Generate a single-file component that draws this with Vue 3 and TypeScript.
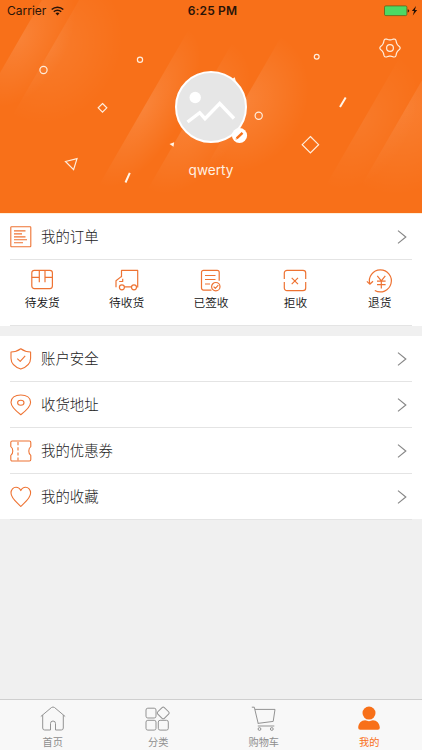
<script setup lang="ts">
interface Streak { x: number; y: number; w: number; h: number; o: number }
interface Entry { id: string; label: string }

const streaks: Streak[] = [
  { x: 20, y: 38, w: 56, h: 150, o: 0.13 },
  { x: 52, y: 47, w: 80, h: 160, o: 0.08 },
  { x: 144, y: 107, w: 46, h: 180, o: 0.14 },
  { x: 190, y: 116, w: 60, h: 170, o: 0.13 },
  { x: 244, y: 101, w: 72, h: 150, o: 0.13 },
  { x: 363, y: 121, w: 56, h: 150, o: 0.07 },
  { x: 406, y: 108, w: 90, h: 180, o: 0.1 },
]

// Six-lobed outline of the settings gear, centred on (11, 11)
const gearPoints: string = Array.from({ length: 72 }, (_, i) => {
  const a = (i / 72) * Math.PI * 2
  const r = 9 + Math.cos(6 * a) + 0.15 * Math.cos(12 * a)
  return `${(11 + r * Math.cos(a)).toFixed(2)},${(11 + r * Math.sin(a)).toFixed(2)}`
}).join(' ')

const orders: Entry[] = [
  { id: 'box', label: '待发货' },
  { id: 'truck', label: '待收货' },
  { id: 'signed', label: '已签收' },
  { id: 'reject', label: '拒收' },
  { id: 'refund', label: '退货' },
]

const entries: Entry[] = [
  { id: 'shield', label: '账户安全' },
  { id: 'pin', label: '收货地址' },
  { id: 'ticket', label: '我的优惠券' },
  { id: 'heart', label: '我的收藏' },
]

const tabs: Entry[] = [
  { id: 'home', label: '首页' },
  { id: 'category', label: '分类' },
  { id: 'cart', label: '购物车' },
  { id: 'me', label: '我的' },
]
</script>

<template>
  <main class="screen">
    <header class="hero">
      <svg class="hero-art" viewBox="0 0 422 213" aria-hidden="true">
        <defs>
          <radialGradient v-for="(s, i) in streaks" :id="`glow${i}`" :key="i" cx="0" cy="0.5" r="0.5" gradientTransform="translate(0 0) scale(1.7 1)">
            <stop offset="0" stop-color="#fff" :stop-opacity="s.o" />
            <stop offset="0.5" stop-color="#fff" :stop-opacity="s.o * 0.5" />
            <stop offset="1" stop-color="#fff" stop-opacity="0" />
          </radialGradient>
        </defs>
        <rect
          v-for="(s, i) in streaks"
          :key="i"
          :y="-s.h / 2"
          :width="s.w"
          :height="s.h"
          :fill="`url(#glow${i})`"
          :transform="`translate(${s.x} ${s.y}) rotate(30)`"
        />
        <g fill="none" stroke="#ffeedd" stroke-width="1.2">
          <circle cx="43.5" cy="70" r="3.6" />
          <circle cx="140" cy="59.7" r="2.6" />
          <circle cx="316.7" cy="56.7" r="2.4" />
          <circle cx="258.7" cy="115.7" r="3.6" />
          <path d="M102.5 103.500l4.300 4.300-4.300 4.300-4.300-4.300z" />
          <path d="M310.400 136.500l8.200 8.200-8.200 8.200-8.200-8.200z" />
          <path d="M65.500 161.500L77 158.700 73.600 169.600z" />
        </g>
        <g stroke="#fff5e8" stroke-width="2">
          <path d="M129.800 172.800l-4.300 9.700M345.700 97.500l-5.700 9.600" />
        </g>
        <path d="M169.500 143.900l4.700-1.700-.7 4.500zM231 79.500l3.800-2.200 1 4z" fill="#fff5e8" />
      </svg>

      <div class="status">
        <div class="carrier">
          <span>Carrier</span>
          <svg width="13" height="10" viewBox="0 0 13 10">
            <g fill="none" stroke="#2a1408" stroke-width="1.500">
              <path d="M.7 3.500a8.300 8.300 0 0 1 11.600 0M2.800 5.700a5.300 5.300 0 0 1 7.400 0" />
            </g>
            <path d="M4.500 7.300a3 3 0 0 1 4 0l-2 2.100z" fill="#2a1408" />
          </svg>
        </div>
        <span class="clock">6:25 PM</span>
        <div class="power">
          <svg width="34" height="12" viewBox="0 0 34 12">
            <rect x=".5" y=".9" width="22.400" height="9.700" rx="1.300" fill="#4cd964" stroke="#59651e" stroke-width=".8" />
            <path d="M23.700 4.200q1.500 0 1.500 1.600t-1.500 1.600z" fill="#44200b" />
            <path d="M32 1l-4.100 5h2.200l-1.300 4.600 4.400-5.700h-2.300z" fill="#241006" />
          </svg>
        </div>
      </div>

      <div class="settings">
        <svg width="22" height="22" viewBox="0 0 22 22" fill="none" stroke="#ffeedd" stroke-width="1.200" stroke-linejoin="round">
          <polygon :points="gearPoints" />
          <circle cx="11" cy="11" r="3.400" />
        </svg>
      </div>

      <div class="profile">
        <svg class="avatar" width="72" height="72" viewBox="0 0 72 72">
          <circle cx="36" cy="36" r="35" fill="#e6e6e6" stroke="#fff" stroke-width="2" />
          <circle cx="20.200" cy="26.500" r="5.700" fill="#fff" />
          <path d="M12.500 51L24.700 41.700 30 47.700 44.700 32.500 59 47.500" fill="none" stroke="#fff" stroke-width="3.400" />
          <circle cx="64.500" cy="64.500" r="7.600" fill="#fff" />
          <path d="M61.700 67.400l5.800-5.600" stroke="#f87019" stroke-width="2.400" />
          <path d="M60.500 68.600l1.600-.4-1.100-1.200z" fill="#f87019" />
        </svg>
        <span class="name">qwerty</span>
      </div>
    </header>

    <section class="card orders">
      <div class="row">
        <svg class="row-icon" viewBox="0 0 22 22">
          <rect x=".8" y=".8" width="20" height="20" rx=".7" />
          <path d="M4 4.900h11.500M4 7.900h8M4 10.900h11.500M4 13.800h13M4 16.800h9" />
        </svg>
        <span class="row-label">我的订单</span>
        <svg class="chevron" viewBox="0 0 10 14"><path d="M1 .6l7.800 6.400-7.800 6.400" /></svg>
      </div>
      <div class="order-grid">
        <div v-for="o in orders" :key="o.id" class="order">
          <svg class="order-icon" viewBox="0 0 26 26">
            <g v-if="o.id === 'box'">
              <rect x="2.800" y="2.300" width="20.600" height="18.300" rx="2.500" />
              <path d="M2.800 9.300h7.500M16 9.300h7.400M10.300 2.300v12M16 2.300v12" />
            </g>
            <g v-else-if="o.id === 'truck'">
              <path d="M7.500 9.300V2.400h16.200v17M7.500 8.400L2 12.700v6.500M10.500 18.900h7M5.200 13.500h3.500v-2.800" />
              <circle cx="7.900" cy="19.300" r="2.500" /><circle cx="20" cy="19.300" r="2.500" />
            </g>
            <g v-else-if="o.id === 'signed'">
              <path d="M13.500 22.100H5.500a2 2 0 0 1-2-2V4.300a2 2 0 0 1 2-2h13.700a2 2 0 0 1 2 2v8.500M7 7.500h10.500M7 11.500h10.500M7 16h5" />
              <circle cx="17.800" cy="18.700" r="4.200" /><path d="M15.600 18.700l1.700 1.700 3-3.200" />
            </g>
            <g v-else-if="o.id === 'reject'">
              <path d="M2.300 11V5a2.700 2.700 0 0 1 2.700-2.700h16A2.700 2.700 0 0 1 23.700 5v6M2.300 14v6A2.700 2.700 0 0 0 5 22.700h16a2.700 2.700 0 0 0 2.700-2.700v-6M9.700 9.800l6.300 6.300M16 9.800l-6.300 6.300" />
            </g>
            <g v-else>
              <path d="M2.800 16A11 11 0 1 1 7.800 22.400M-.1 13.300l2.900 2.900 3.200-2.900M10.300 7.800l4 5 4-5M14.300 12.800v7.700M10 13.200h8.600M10 16.700h8.600" />
            </g>
          </svg>
          <span class="order-label">{{ o.label }}</span>
        </div>
      </div>
    </section>

    <section class="card menu">
      <div v-for="e in entries" :key="e.id" class="row">
        <svg class="row-icon" viewBox="0 0 22 22">
          <g v-if="e.id === 'shield'">
            <path d="M10.800.8C7.800 3 4.500 4 1 4v6.300c0 5 4 8.800 9.800 10.800 5.800-2 9.800-5.800 9.800-10.800V4c-3.500 0-6.800-1-9.800-3.200z" />
            <path d="M7.300 10.700l2.900 2.700 5-5.600" />
          </g>
          <g v-else-if="e.id === 'pin'">
            <path d="M10.800 20.800C6.500 17.500 1 12.500 1 8.300 1 3.700 5 1 10.800 1s9.800 2.700 9.800 7.300c0 4.200-5.500 9.200-9.800 12.500z" />
            <ellipse cx="10.800" cy="8.700" rx="3.200" ry="2.500" />
          </g>
          <g v-else-if="e.id === 'ticket'">
            <path d="M2.200 1h17.200q1.400 0 1.400 1.400v4.200q-2 1.200-2 4.400t2 4.400v4.200q0 1.400-1.400 1.400H2.200Q.8 21 .8 19.600v-4.200q2-1.200 2-4.400t-2-4.400V2.400Q.8 1 2.200 1z" />
            <path d="M8 2v18.500" stroke-dasharray="3.200 2" />
          </g>
          <g v-else>
            <path d="M10.800 20.500C7.500 16.800 1 12.500 1 7 1 3.600 3.300 1.300 6 1.300c2.300 0 3.900 1.300 4.800 3.300.9-2 2.500-3.300 4.800-3.300 2.700 0 5 2.300 5 5.700 0 5.500-6.500 9.800-9.800 13.500z" />
          </g>
        </svg>
        <span class="row-label">{{ e.label }}</span>
        <svg class="chevron" viewBox="0 0 10 14"><path d="M1 .6l7.800 6.400-7.800 6.400" /></svg>
      </div>
    </section>

    <nav class="tabs">
      <div v-for="t in tabs" :key="t.id" class="tab" :class="{ active: t.id === 'me' }">
        <svg class="tab-icon" viewBox="0 0 26 26">
          <path v-if="t.id === 'home'" d="M.8 10.500L11.500 1.500q1.500-1 3 0L25.200 10.500M2.700 9v13q0 2 2 2h5.800v-6.500a2.500 2.500 0 0 1 5 0V24h5.800q2 0 2-2V9" />
          <g v-else-if="t.id === 'category'">
            <rect x="1" y="2.200" width="10" height="9.800" rx="1.800" />
            <rect x="1" y="14.300" width="10" height="9.800" rx="1.800" />
            <rect x="13.300" y="14.300" width="10" height="9.800" rx="1.800" />
            <rect x="13.600" y="2.300" width="9.200" height="9.200" rx="1.600" transform="rotate(45 18.200 6.900)" />
          </g>
          <g v-else-if="t.id === 'cart'">
            <path d="M.8 1.200h2.500L7.200 17.500M4 3.400h20l-1.800 12L6.800 17.400M6.800 20h16.500" />
            <circle cx="8.500" cy="23" r="1.400" /><circle cx="20.800" cy="23" r="1.400" />
          </g>
          <g v-else class="solid">
            <circle cx="13" cy="7.100" r="6.500" />
            <path d="M2.200 21.800c0-4.400 3.200-7.500 6.900-7.500 1.400 0 2.400.9 3.900.9s2.500-.9 3.900-.9c3.700 0 6.900 3.100 6.900 7.500q0 2-2 2H4.200q-2 0-2-2z" />
          </g>
        </svg>
        <span>{{ t.label }}</span>
      </div>
    </nav>
  </main>
</template>

<style>
body { background: #f0f0f0; }
</style>

<style scoped>
.screen {
  width: 422px;
  height: 750px;
  display: flex;
  flex-direction: column;
  overflow: hidden;
  background: #f0f0f0;
  font-family: "Noto Sans CJK SC", sans-serif;
}
.hero {
  position: relative;
  height: 213px;
  box-sizing: content-box;
  border-bottom: 1px solid #fff0da;
  background: #f87019;
  display: flex;
  flex-direction: column;
  flex: none;
}
.hero-art { position: absolute; left: 0; top: 0; width: 422px; height: 213px; }
.status {
  position: relative;
  height: 22px;
  display: grid;
  grid-template-columns: 1fr auto 1fr;
  align-items: center;
  padding: 0 4px 0 7px;
  font: 12px/22px Inter, sans-serif;
  color: #2a1408;
}
.carrier { display: flex; align-items: center; gap: 5px; }
.clock { font-weight: 600; letter-spacing: 0.15px; }
.power { display: flex; justify-content: flex-end; }
.settings { position: relative; display: flex; justify-content: flex-end; padding: 15px 21.500px 0 0; height: 34px; }
.profile { position: relative; display: flex; flex-direction: column; align-items: center; }
.avatar { overflow: visible; }
.name { margin-top: 17px; font: 13.600px/20px Inter, sans-serif; color: #fff0e2; }
.card { background: #fff; flex: none; }
.orders { height: 112px; }
.menu { margin-top: 10px; height: 183px; }
.row {
  height: 46px;
  box-sizing: border-box;
  margin: 0 10px;
  border-bottom: 1px solid #e4e4e4;
  display: flex;
  align-items: center;
}
.row-icon { width: 22px; height: 22px; flex: none; fill: none; stroke: #ee7333; stroke-width: 1.100; stroke-linejoin: round; }
.row-label { margin-left: 9px; padding-bottom: 2px; flex: 1; font-size: 14.400px; line-height: 22px; font-weight: 300; color: #222; }
.chevron { width: 10px; height: 14px; margin-right: 5px; fill: none; stroke: #888; stroke-width: 1.200; }
.order-grid {
  height: 66px;
  box-sizing: border-box;
  margin: 0 10px;
  display: grid;
  grid-template-columns: repeat(5, 84.400px);
  justify-content: center;
  border-bottom: 1px solid #e4e4e4;
}
.order { display: flex; flex-direction: column; align-items: center; padding-top: 8px; }
.order-icon { width: 26px; height: 26px; fill: none; stroke: #ee7333; stroke-width: 1.200; overflow: visible; stroke-linejoin: round; }
.order-label { margin-top: -1px; font-size: 11.700px; line-height: 17px; font-weight: 350; color: #111; }
.tabs {
  margin-top: auto;
  height: 51px;
  box-sizing: border-box;
  border-top: 1px solid #cfcfcf;
  background: #f8f8f8;
  display: grid;
  grid-template-columns: repeat(4, 1fr);
}
.tab { display: flex; flex-direction: column; align-items: center; padding-top: 6px; font-size: 10.200px; line-height: 14px; color: #8e8e8e; }
.tab-icon { width: 26px; height: 26px; margin-bottom: 3px; fill: none; stroke: #939393; stroke-width: 1; }
.tab.active { color: #f87019; }
.solid { fill: #f87019; stroke: none; }
</style>
